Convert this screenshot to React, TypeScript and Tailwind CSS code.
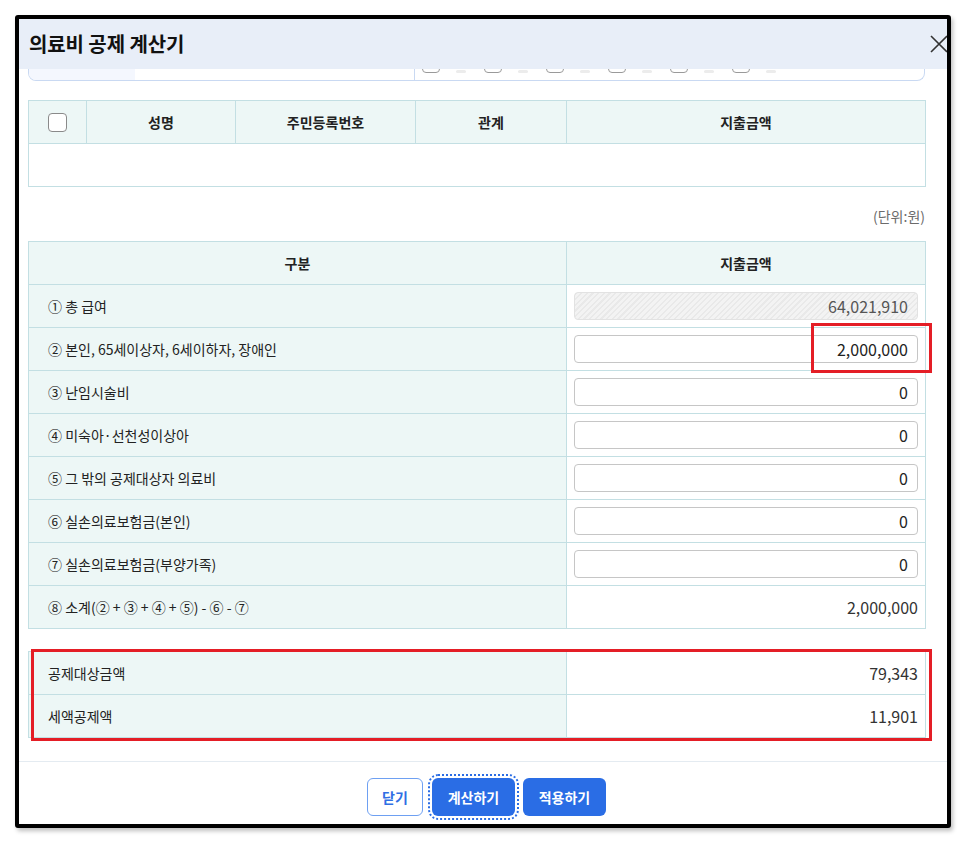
import React from "react";

const FONT = { fontFamily: '"Noto Sans CJK KR", "Noto Sans", sans-serif' };

const rows: { label: string; value: string; kind: "disabled" | "input" | "text" }[] = [
  { label: "① 총 급여", value: "64,021,910", kind: "disabled" },
  { label: "② 본인, 65세이상자, 6세이하자, 장애인", value: "2,000,000", kind: "input" },
  { label: "③ 난임시술비", value: "0", kind: "input" },
  { label: "④ 미숙아·선천성이상아", value: "0", kind: "input" },
  { label: "⑤ 그 밖의 공제대상자 의료비", value: "0", kind: "input" },
  { label: "⑥ 실손의료보험금(본인)", value: "0", kind: "input" },
  { label: "⑦ 실손의료보험금(부양가족)", value: "0", kind: "input" },
  { label: "⑧ 소계(② + ③ + ④ + ⑤) - ⑥ - ⑦", value: "2,000,000", kind: "text" },
];

function TopCheck() {
  return (
    <div className="flex items-end mb-[7px]">
      <div className="w-[18px] h-[18px] border border-[#9a9a9a] rounded-[4px] bg-white shrink-0" />
      <div className="ml-[16px] w-[10px] h-[3px] bg-[#ececec] rounded-sm" />
    </div>
  );
}

export default function App() {
  return (
    <div className="w-[966px] h-[842px] bg-white pt-[15px] pl-[15px]" style={FONT}>
      <div className="w-[936px] h-[813px] border-4 border-black rounded-[3px] overflow-hidden bg-white flex flex-col shadow-[2px_3px_4px_rgba(0,0,0,0.25)]">
        {/* header */}
        <div className="h-[50px] shrink-0 bg-[#e8eef8] flex items-center pl-[10px]">
          <span className="text-[20px] font-bold text-[#111] tracking-[-0.1px]">의료비 공제 계산기</span>
          <svg className="ml-auto mr-[-1px]" width="18" height="18" viewBox="0 0 18 18">
            <path d="M1 1 L17 17 M17 1 L1 17" stroke="#333" strokeWidth="1.6" fill="none" />
          </svg>
        </div>

        {/* scroll content */}
        <div className="flex-1 pl-[9px] pr-[22px]">
          {/* partially scrolled box */}
          <div className="h-[12px] overflow-hidden flex border-x border-b border-[#c9d9f2] rounded-b-[8px]">
            <div className="w-[106px] bg-[#f4f7fe]" />
            <div className="w-[280px] border-r border-[#c9d9f2]" />
            <div className="flex-1 flex items-end pl-[7px] gap-[18px]">
              <TopCheck />
              <TopCheck />
              <TopCheck />
              <TopCheck />
              <TopCheck />
              <TopCheck />
            </div>
          </div>

          {/* table 1 */}
          <table className="mt-[19px] w-[897px] border-collapse table-fixed text-[14px] text-[#222]">
            <colgroup>
              <col className="w-[58px]" />
              <col className="w-[149px]" />
              <col className="w-[180px]" />
              <col className="w-[151px]" />
              <col className="w-[359px]" />
            </colgroup>
            <thead>
              <tr className="h-[43px] bg-[#edf7f6]">
                <th className="border border-[#c3dfe3]">
                  <div className="mx-auto w-[19px] h-[19px] border border-[#8a8a8a] rounded-[4px] bg-white" />
                </th>
                <th className="border border-[#c3dfe3] font-bold">성명</th>
                <th className="border border-[#c3dfe3] font-bold">주민등록번호</th>
                <th className="border border-[#c3dfe3] font-bold">관계</th>
                <th className="border border-[#c3dfe3] font-bold">지출금액</th>
              </tr>
            </thead>
            <tbody>
              <tr className="h-[43px]">
                <td colSpan={5} className="border border-[#c3dfe3]" />
              </tr>
            </tbody>
          </table>

          <div className="mt-[19px] mb-[15px] h-[20px] text-right text-[14px] leading-[20px] text-[#6b6b6b]">(단위:원)</div>

          {/* table 2 */}
          <table className="w-[897px] border-collapse table-fixed text-[14px] text-[#222]">
            <colgroup>
              <col className="w-[538px]" />
              <col className="w-[359px]" />
            </colgroup>
            <thead>
              <tr className="h-[43px] bg-[#edf7f6]">
                <th className="border border-[#c3dfe3] font-bold">구분</th>
                <th className="border border-[#c3dfe3] font-bold">지출금액</th>
              </tr>
            </thead>
            <tbody>
              {rows.map((r, i) => (
                <tr key={i} className="h-[43px]">
                  <td className="border border-[#c3dfe3] bg-[#edf7f6] pl-[19px]">{r.label}</td>
                  <td className="border border-[#c3dfe3] px-[7px] relative">
                    {r.kind === "disabled" && (
                      <div className="h-[28px] rounded-[4px] border border-[#e2e2e2] bg-[repeating-linear-gradient(135deg,#e9e9e9_0px,#e9e9e9_1.5px,#f3f3f3_1.5px,#f3f3f3_4px)] flex items-center justify-end pr-[9px] text-[16px] text-[#555]">
                        {r.value}
                      </div>
                    )}
                    {r.kind === "input" && (
                      <input
                        readOnly
                        value={r.value}
                        className="block w-full h-[28px] rounded-[4px] border border-[#c6c6c6] bg-white text-right pr-[9px] text-[16px] text-[#222] outline-none"
                        style={FONT}
                      />
                    )}
                    {r.kind === "text" && <div className="text-right text-[16px] text-[#333]">{r.value}</div>}
                    {i === 1 && (
                      <div className="absolute left-[244px] right-[-7px] top-[-5px] bottom-[-3px] border-[3px] border-[#e41e26] pointer-events-none" />
                    )}
                  </td>
                </tr>
              ))}
            </tbody>
          </table>

          {/* table 3 */}
          <div className="relative mt-[22px]">
            <table className="w-[897px] border-collapse table-fixed text-[14px] text-[#222]">
              <colgroup>
                <col className="w-[538px]" />
                <col className="w-[359px]" />
              </colgroup>
              <tbody>
                <tr className="h-[43px]">
                  <td className="border border-[#c3dfe3] bg-[#edf7f6] pl-[19px]">공제대상금액</td>
                  <td className="border border-[#c3dfe3] pr-[7px] text-right text-[16px] text-[#333]">79,343</td>
                </tr>
                <tr className="h-[43px]">
                  <td className="border border-[#c3dfe3] bg-[#edf7f6] pl-[19px]">세액공제액</td>
                  <td className="border border-[#c3dfe3] pr-[7px] text-right text-[16px] text-[#333]">11,901</td>
                </tr>
              </tbody>
            </table>
            <div className="absolute left-[3px] right-[-7px] top-[-2px] bottom-[-3px] border-[3px] border-[#e41e26] pointer-events-none" />
          </div>
        </div>

        {/* footer */}
        <div className="shrink-0 border-t border-[#e4ebf1] pt-[16px] pb-[8px] flex justify-center pl-[7px]">
          <button className="w-[56px] h-[38px] rounded-[6px] border border-[#6ea0f2] bg-white text-[#2f6fe4] text-[14px] font-bold" style={FONT}>
            닫기
          </button>
          <button className="ml-[9px] w-[83px] h-[38px] rounded-[6px] bg-[#2a6de5] text-white text-[14px] font-bold outline-2 outline-dotted outline-[#2a6de5] outline-offset-2" style={FONT}>
            계산하기
          </button>
          <button className="ml-[8px] w-[83px] h-[38px] rounded-[6px] bg-[#2a6de5] text-white text-[14px] font-bold" style={FONT}>
            적용하기
          </button>
        </div>
      </div>
    </div>
  );
}
